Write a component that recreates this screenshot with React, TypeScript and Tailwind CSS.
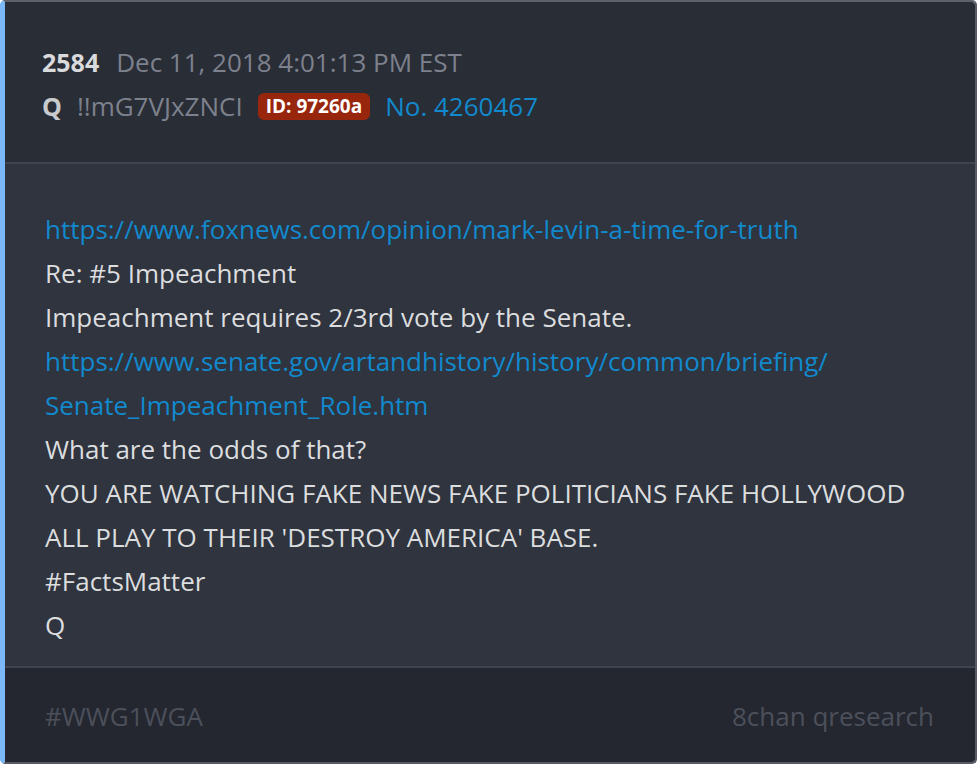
import React from "react";

export default function App() {
  return (
    <div className="w-[978px] h-[764px] bg-[#ffffff] font-['Open_Sans',sans-serif]">
      <div className="w-[977px] h-[764px] flex flex-col overflow-hidden rounded-[5px] border-t-2 border-r-2 border-b-2 border-l-[5px] border-t-[#5d616c] border-r-[#555a66] border-b-[#555a66] border-l-[#7ab8fa]">
        <div className="h-[160px] bg-[#292d36] pl-[37px] pt-[38px] text-[26px] leading-[44px]">
          <div className="flex items-baseline">
            <span className="font-bold text-[25px] text-[#d9dadc]">2584</span>
            <span className="ml-[17px] text-[#7d818d]">Dec 11, 2018 4:01:13 PM EST</span>
          </div>
          <div className="flex items-center">
            <span className="font-bold text-[25px] text-[#c9cacd]">Q</span>
            <span className="ml-[15px] text-[#7d818d]">!!mG7VJxZNCI</span>
            <span className="ml-[15px] bg-[#98260d] text-white font-bold text-[19px] leading-[27px] px-[8px] rounded-[6px]">ID: 97260a</span>
            <span className="ml-[15px] text-[#1289cd]">No. 4260467</span>
          </div>
        </div>
        <div className="h-[2px] bg-[#3f434e]" />
        <div className="h-[502px] bg-[#2f343e] pl-[40px] pt-[43px] text-[26px] leading-[44px] text-[#dcdddf]">
          <div className="text-[#1289cd]">https://www.foxnews.com/opinion/mark-levin-a-time-for-truth</div>
          <div>Re: #5 Impeachment</div>
          <div>Impeachment requires 2/3rd vote by the Senate.</div>
          <div className="text-[#1289cd]">https://www.senate.gov/artandhistory/history/common/briefing/</div>
          <div className="text-[#1289cd]">Senate_Impeachment_Role.htm</div>
          <div>What are the odds of that?</div>
          <div>YOU ARE WATCHING FAKE NEWS FAKE POLITICIANS FAKE HOLLYWOOD</div>
          <div>ALL PLAY TO THEIR 'DESTROY AMERICA' BASE.</div>
          <div>#FactsMatter</div>
          <div>Q</div>
        </div>
        <div className="h-[2px] bg-[#40444f]" />
        <div className="flex-1 bg-[#24272f] pl-[40px] pr-[41px] pt-[3px] flex items-center justify-between text-[26px] text-[#4c505b]">
          <span>#WWG1WGA</span>
          <span>8chan qresearch</span>
        </div>
      </div>
    </div>
  );
}
